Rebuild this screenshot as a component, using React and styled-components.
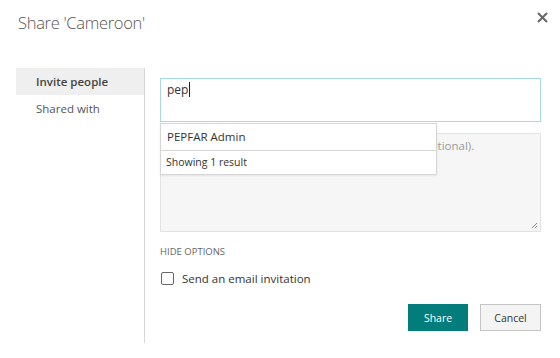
import React from "react";
import styled, { createGlobalStyle } from "styled-components";

const Global = createGlobalStyle`
  html, body { margin: 0; padding: 0; background: #fff; }
  body { font-family: "Open Sans", "Liberation Sans", sans-serif; color: #333; }
`;

const Dialog = styled.div`
  width: 560px;
  height: 358px;
  background: #fff;
  position: relative;
  overflow: hidden;
`;

const Header = styled.div`
  display: flex;
  justify-content: space-between;
  align-items: flex-start;
  padding: 11px 11px 0 18px;
  height: 58px;
  box-sizing: border-box;
`;

const Title = styled.h1`
  margin: 0;
  font-weight: 300;
  font-size: 16.5px;
  color: #555;
  letter-spacing: -0.3px;
`;

const Close = styled.button`
  border: none;
  background: none;
  padding: 0;
  margin-top: 0;
  width: 14px;
  height: 14px;
  color: #666;
  cursor: pointer;
`;

const Body = styled.div`
  display: flex;
  padding: 10px 0 0 16px;
`;

const Nav = styled.ul`
  list-style: none;
  margin: 0;
  padding: 0;
  width: 128px;
`;

const NavItem = styled.li`
  height: 27px;
  line-height: 27px;
  padding-left: 20px;
  font-size: 11.5px;
  font-weight: ${(p) => (p.$active ? 600 : 400)};
  color: ${(p) => (p.$active ? "#444" : "#555")};
  background: ${(p) => (p.$active ? "#efefef" : "transparent")};
`;

const Main = styled.div`
  border-left: 1px solid #d6d6d6;
  width: 381px;
  height: 265px;
  padding: 10px 0 0 15px;
  position: relative;
`;

const PeopleInput = styled.div`
  height: 44px;
  box-sizing: border-box;
  border: 1px solid #a6dcdf;
  padding: 2px 6px;
  font-size: 12px;
  color: #333;
`;

const Caret = styled.span`
  display: inline-block;
  width: 1px;
  height: 15px;
  background: #222;
  vertical-align: -3px;
  margin-left: 1px;
`;

const Suggest = styled.div`
  position: absolute;
  top: 55px;
  left: 15px;
  width: 275px;
  background: #fff;
  border: 1px solid #d6d6d6;
  box-shadow: 0 1px 2px rgba(0, 0, 0, 0.08);
  z-index: 2;
`;

const SuggestRow = styled.div`
  height: ${(p) => (p.$small ? "23px" : "26px")};
  line-height: ${(p) => (p.$small ? "23px" : "26px")};
  padding-left: ${(p) => (p.$small ? "5px" : "6px")};
  font-size: ${(p) => (p.$small ? "10.5px" : "11.5px")};
  color: #333;
  border-top: ${(p) => (p.$small ? "1px solid #d6d6d6" : "none")};
`;

const Message = styled.div`
  margin-top: 11px;
  height: 99px;
  box-sizing: border-box;
  background: #f6f6f6;
  border: 1px solid #e3e3e3;
  padding: 4px 6px;
  font-size: 11.5px;
  color: #9a9a9a;
  position: relative;
`;

const Grip = styled.svg`
  position: absolute;
  right: 2px;
  bottom: 2px;
`;

const Toggle = styled.div`
  margin-top: 13px;
  font-size: 9.5px;
  color: #666;
`;

const CheckRow = styled.label`
  display: flex;
  align-items: center;
  gap: 8px;
  margin-top: 13px;
  font-size: 11.5px;
  color: #333;
`;

const Box = styled.span`
  width: 11px;
  height: 11px;
  border: 1px solid #666;
  border-radius: 2px;
  margin-left: 1px;
`;

const Actions = styled.div`
  display: flex;
  justify-content: flex-end;
  gap: 12px;
  margin-top: 18px;
`;

const Btn = styled.button`
  width: ${(p) => (p.$primary ? "60px" : "61px")};
  height: 27px;
  font-family: inherit;
  font-size: 10.5px;
  border: 1px solid ${(p) => (p.$primary ? "#037c7c" : "#c4c4c4")};
  background: ${(p) => (p.$primary ? "#037c7c" : "#f4f4f4")};
  color: ${(p) => (p.$primary ? "#fff" : "#333")};
  padding: 0;
`;

export default function App() {
  return (
    <Dialog>
      <Global />
      <Header>
        <Title>Share 'Cameroon'</Title>
        <Close aria-label="Close">
          <svg width="11" height="11" viewBox="0 0 11 11">
            <path d="M1 1L10 10M10 1L1 10" stroke="#666" strokeWidth="2" />
          </svg>
        </Close>
      </Header>
      <Body>
        <Nav>
          <NavItem $active>Invite people</NavItem>
          <NavItem>Shared with</NavItem>
        </Nav>
        <Main>
          <PeopleInput>
            pep<Caret />
          </PeopleInput>
          <Suggest>
            <SuggestRow>PEPFAR Admin</SuggestRow>
            <SuggestRow $small>Showing 1 result</SuggestRow>
          </Suggest>
          <Message>
            Include a personal message with this invitation (optional).
            <Grip width="7" height="7" viewBox="0 0 7 7">
              <path d="M6 1L1 6M6 4L4 6" stroke="#888" strokeWidth="1" />
            </Grip>
          </Message>
          <Toggle>HIDE OPTIONS</Toggle>
          <CheckRow>
            <Box />
            Send an email invitation
          </CheckRow>
          <Actions>
            <Btn $primary>Share</Btn>
            <Btn>Cancel</Btn>
          </Actions>
        </Main>
      </Body>
    </Dialog>
  );
}
